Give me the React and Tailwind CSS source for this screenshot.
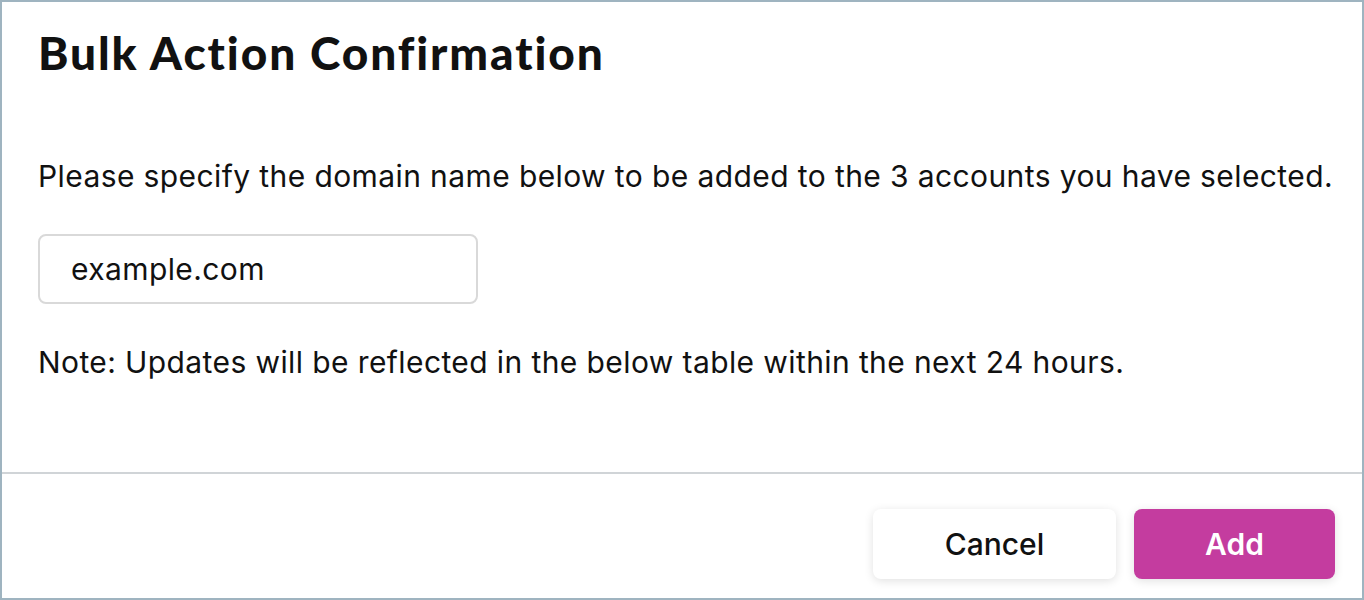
export default function App() {
  return (
    <div className="w-[1364px] h-[600px] border-2 border-[#9fb4c0] bg-white flex flex-col">
      <div className="px-[36px] pt-[24px] flex-1 flex flex-col font-['Inter',sans-serif] text-[#111111]">
        <h1 className="text-[46px] leading-[54px] font-black font-['Lato',sans-serif] tracking-[1.9px]">
          Bulk Action Confirmation
        </h1>
        <p className="mt-[78px] text-[30px] leading-[36px] tracking-[0.4px] whitespace-nowrap">
          Please specify the domain name below to be added to the 3 accounts you have selected.
        </p>
        <input
          type="text"
          defaultValue="example.com"
          className="mt-[40px] w-[440px] h-[70px] border-2 border-[#d9d9d9] rounded-[8px] px-[31px] text-[30px] tracking-[0.4px] text-[#111111] outline-none"
        />
        <p className="mt-[40px] text-[30px] leading-[36px] tracking-[0.4px] whitespace-nowrap">
          Note: Updates will be reflected in the below table within the next 24 hours.
        </p>
      </div>
      <div className="border-t-2 border-[#d0d4d7] h-[126px] flex items-start justify-end gap-[18px] pr-[27px] pt-[35px] font-['Inter',sans-serif]">
        <button className="w-[243px] h-[70px] rounded-[8px] bg-white shadow-[0_2px_10px_rgba(0,0,0,0.12)] text-[30px] font-medium text-[#111111]">
          Cancel
        </button>
        <button className="w-[201px] h-[70px] rounded-[8px] bg-[#c43c9f] shadow-[0_2px_10px_rgba(0,0,0,0.12)] text-[30px] font-semibold text-white">
          Add
        </button>
      </div>
    </div>
  );
}
